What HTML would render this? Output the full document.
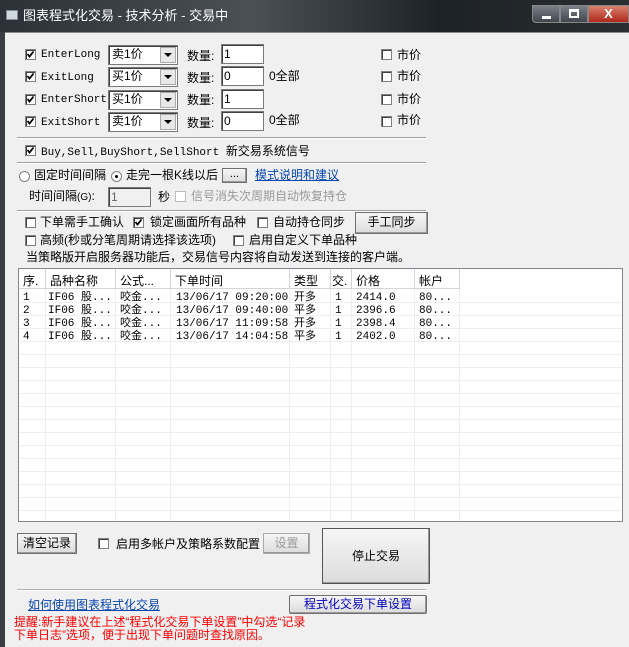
<!DOCTYPE html><html><head><meta charset="utf-8"><style>
*{margin:0;padding:0;box-sizing:border-box}
body{width:629px;height:647px;overflow:hidden;background:#f0f0f0;font-family:"Liberation Sans","Noto Sans CJK SC",sans-serif;font-size:12px;color:#000;position:relative}
.a{position:absolute;white-space:nowrap;line-height:14px}
.cb{position:absolute;width:11px;height:11px;border:1px solid #808080;background:#fff;box-shadow:inset 1px 1px 0 #404040}
.cb svg{position:absolute;left:0;top:0}
.mono{font-family:"Liberation Mono","Noto Sans CJK SC",monospace;font-size:11px}
.combo{position:absolute;width:70px;height:20px;background:#fff;border:1px solid #7a7a7a;box-shadow:inset 1px 1px 0 #404040}
.combo span{position:absolute;left:3px;top:0px;line-height:17px}
.combo i{position:absolute;right:1px;top:1px;width:16px;height:16px;background:#e8e8e8;border:1px solid #aaa}
.combo i::after{content:"";position:absolute;left:3px;top:5px;border:4px solid transparent;border-top:4px solid #000;border-bottom:0}
.inp{position:absolute;width:43px;height:20px;background:#fff;border:1px solid #7a7a7a;box-shadow:inset 1px 1px 0 #404040;padding:2px 2px;line-height:14px}
.sep{position:absolute;left:17px;width:409px;height:2px;border-top:1px solid #a0a0a0;border-bottom:1px solid #fff}
.btn{position:absolute;background:linear-gradient(#f6f6f6,#dcdcdc);border:1px solid #707070;box-shadow:inset -1px -1px 0 #999;text-align:center}
.rad{position:absolute;width:11px;height:11px;border-radius:50%;border:1px solid #808080;background:#fff}
.list{position:absolute;left:18px;top:268px;width:605px;height:254px;background:#fff;border:1px solid #828790;overflow:hidden}
.hd{position:absolute;top:0;height:20px;border-right:1px solid #d5d5d5;border-bottom:1px solid #d5d5d5;padding:3px 4px;background:#fff}
.vl{position:absolute;top:20px;bottom:0;width:1px;background:#eee}
.hl{position:absolute;left:0;right:0;height:1px;background:#eee}
.cell{position:absolute;font-family:"Liberation Mono","Noto Sans CJK SC",monospace;font-size:11px;line-height:13px}
</style></head><body>
<div style="position:absolute;left:0;top:0;width:629px;height:32px;background:linear-gradient(90deg,#2a3238,#4a5055 40%,#1d2226 70%,#2a2e30)"></div>
<div style="position:absolute;left:6px;top:10px;width:12px;height:10px;background:#d0d8e0;border:1px solid #889"></div>
<div class="a" style="left:23px;top:9px;color:#fff;font-size:13px">图表程式化交易 - 技术分析 - 交易中</div>
<div style="position:absolute;left:532px;top:5px;width:28px;height:18px;border:1px solid #888;background:linear-gradient(#7a8088,#40464c);border-radius:0 0 0 4px"><div style="position:absolute;left:9px;top:10px;width:9px;height:3px;background:#fff"></div></div>
<div style="position:absolute;left:560px;top:5px;width:28px;height:18px;border:1px solid #888;background:linear-gradient(#7a8088,#40464c)"><div style="position:absolute;left:8px;top:3px;width:10px;height:9px;border:2px solid #fff;border-top-width:3px"></div></div>
<div style="position:absolute;left:588px;top:5px;width:41px;height:18px;border:1px solid #888;background:linear-gradient(#d88070,#b02818);color:#fff;font-weight:bold;text-align:center;font-size:13px;line-height:16px">X</div>
<div style="position:absolute;left:0;top:32px;width:5px;height:615px;background:#3a3e42"></div>
<div style="position:absolute;left:5px;top:32px;width:624px;height:1px;background:#888"></div>

<div class="cb" style="left:25px;top:49px"><svg width="9" height="9"><path d="M1.5 4 L3.5 6.5 L7.5 1.5" stroke="#000" stroke-width="1.8" fill="none"/></svg></div><div class="a mono" style="left:41px;top:48px">EnterLong</div>
<div class="combo" style="left:108px;top:45px"><span>卖1价</span><i></i></div>
<div class="a" style="left:187px;top:49px">数量:</div><div class="inp" style="left:221px;top:44px">1</div>
<div class="cb" style="left:381px;top:49px"></div><div class="a" style="left:397px;top:48px">市价</div>

<div class="cb" style="left:25px;top:71px"><svg width="9" height="9"><path d="M1.5 4 L3.5 6.5 L7.5 1.5" stroke="#000" stroke-width="1.8" fill="none"/></svg></div><div class="a mono" style="left:41px;top:71px">ExitLong</div>
<div class="combo" style="left:108px;top:67px"><span>买1价</span><i></i></div>
<div class="a" style="left:187px;top:71px">数量:</div><div class="inp" style="left:221px;top:66px">0</div>
<div class="a" style="left:269px;top:69px">0全部</div>
<div class="cb" style="left:381px;top:71px"></div><div class="a" style="left:397px;top:69px">市价</div>

<div class="cb" style="left:25px;top:94px"><svg width="9" height="9"><path d="M1.5 4 L3.5 6.5 L7.5 1.5" stroke="#000" stroke-width="1.8" fill="none"/></svg></div><div class="a mono" style="left:41px;top:93px">EnterShort</div>
<div class="combo" style="left:108px;top:90px"><span>买1价</span><i></i></div>
<div class="a" style="left:187px;top:93px">数量:</div><div class="inp" style="left:221px;top:89px">1</div>
<div class="cb" style="left:381px;top:94px"></div><div class="a" style="left:397px;top:92px">市价</div>

<div class="cb" style="left:25px;top:116px"><svg width="9" height="9"><path d="M1.5 4 L3.5 6.5 L7.5 1.5" stroke="#000" stroke-width="1.8" fill="none"/></svg></div><div class="a mono" style="left:41px;top:116px">ExitShort</div>
<div class="combo" style="left:108px;top:112px"><span>卖1价</span><i></i></div>
<div class="a" style="left:187px;top:116px">数量:</div><div class="inp" style="left:221px;top:111px">0</div>
<div class="a" style="left:269px;top:113px">0全部</div>
<div class="cb" style="left:381px;top:116px"></div><div class="a" style="left:397px;top:113px">市价</div>

<div class="sep" style="top:137px"></div>
<div class="cb" style="left:25px;top:145px"><svg width="9" height="9"><path d="M1.5 4 L3.5 6.5 L7.5 1.5" stroke="#000" stroke-width="1.8" fill="none"/></svg></div><div class="a mono" style="left:41px;top:144px">Buy,Sell,BuyShort,SellShort <span style="font-family:'Noto Sans CJK SC';font-size:12px">新交易系统信号</span></div>
<div class="sep" style="top:162px"></div>

<div class="rad" style="left:19px;top:171px"></div><div class="a" style="left:34px;top:168px">固定时间间隔</div>
<div class="rad" style="left:111px;top:171px"><div style="position:absolute;left:3px;top:3px;width:3px;height:3px;border-radius:50%;background:#000"></div></div><div class="a" style="left:126px;top:168px">走完一根K线以后</div>
<div class="btn" style="left:222px;top:168px;width:25px;height:15px;line-height:11px;font-size:11px">...</div>
<div class="a" style="left:255px;top:168px;color:#0645ad;text-decoration:underline">模式说明和建议</div>
<div class="a" style="left:29px;top:189px">时间间隔<span style="font-size:10px">(G)</span>:</div>
<div class="inp" style="left:108px;top:187px;background:#f0f0f0;color:#666">1</div>
<div class="a" style="left:158px;top:190px">秒</div>
<div class="cb" style="left:175px;top:191px;border-color:#bbb;box-shadow:none"></div><div class="a" style="left:191px;top:189px;color:#999">信号消失次周期自动恢复持仓</div>
<div class="sep" style="top:210px"></div>

<div class="cb" style="left:25px;top:217px"></div><div class="a" style="left:40px;top:215px">下单需手工确认</div>
<div class="cb" style="left:133px;top:217px"><svg width="9" height="9"><path d="M1.5 4 L3.5 6.5 L7.5 1.5" stroke="#000" stroke-width="1.8" fill="none"/></svg></div><div class="a" style="left:150px;top:215px">锁定画面所有品种</div>
<div class="cb" style="left:257px;top:217px"></div><div class="a" style="left:273px;top:215px">自动持仓同步</div>
<div class="btn" style="left:355px;top:212px;width:73px;height:22px;line-height:19px">手工同步</div>
<div class="cb" style="left:25px;top:235px"></div><div class="a" style="left:40px;top:233px">高频(秒或分笔周期请选择该选项)</div>
<div class="cb" style="left:233px;top:235px"></div><div class="a" style="left:249px;top:233px">启用自定义下单品种</div>
<div class="a" style="left:26px;top:250px">当策略版开启服务器功能后，交易信号内容将自动发送到连接的客户端。</div>

<div class="list">
<div class="hd" style="left:0;width:27px">序.</div>
<div class="hd" style="left:27px;width:70px">品种名称</div>
<div class="hd" style="left:97px;width:55px">公式...</div>
<div class="hd" style="left:152px;width:119px">下单时间</div>
<div class="hd" style="left:271px;width:41px">类型</div>
<div class="hd" style="left:312px;width:21px;padding:3px 1px">交.</div>
<div class="hd" style="left:333px;width:63px">价格</div>
<div class="hd" style="left:396px;width:45px">帐户</div>
<div class="vl" style="left:26px"></div><div class="vl" style="left:96px"></div><div class="vl" style="left:151px"></div><div class="vl" style="left:270px"></div><div class="vl" style="left:311px"></div><div class="vl" style="left:332px"></div><div class="vl" style="left:395px"></div><div class="vl" style="left:440px"></div>
<div class="hl" style="top:33px"></div><div class="hl" style="top:46px"></div><div class="hl" style="top:59px"></div><div class="hl" style="top:72px"></div><div class="hl" style="top:85px"></div><div class="hl" style="top:98px"></div><div class="hl" style="top:111px"></div><div class="hl" style="top:124px"></div><div class="hl" style="top:137px"></div><div class="hl" style="top:150px"></div><div class="hl" style="top:163px"></div><div class="hl" style="top:176px"></div><div class="hl" style="top:189px"></div><div class="hl" style="top:202px"></div><div class="hl" style="top:215px"></div><div class="hl" style="top:228px"></div><div class="hl" style="top:241px"></div>
<div class="cell" style="left:4px;top:23px">1<br>2<br>3<br>4</div>
<div class="cell" style="left:29px;top:23px">IF06 股...<br>IF06 股...<br>IF06 股...<br>IF06 股...</div>
<div class="cell" style="left:101px;top:23px">咬金...<br>咬金...<br>咬金...<br>咬金...</div>
<div class="cell" style="left:157px;top:23px">13/06/17 09:20:00<br>13/06/17 09:40:00<br>13/06/17 11:09:58<br>13/06/17 14:04:58</div>
<div class="cell" style="left:275px;top:23px">开多<br>平多<br>开多<br>平多</div>
<div class="cell" style="left:316px;top:23px">1<br>1<br>1<br>1</div>
<div class="cell" style="left:337px;top:23px">2414.0<br>2396.6<br>2398.4<br>2402.0</div>
<div class="cell" style="left:400px;top:23px">80...<br>80...<br>80...<br>80...</div>
</div>

<div class="btn" style="left:17px;top:533px;width:60px;height:21px;line-height:18px">清空记录</div>
<div class="cb" style="left:98px;top:538px"></div><div class="a" style="left:116px;top:537px">启用多帐户及策略系数配置</div>
<div class="btn" style="left:263px;top:533px;width:47px;height:21px;line-height:18px;color:#999;border-color:#aaa">设置</div>
<div class="btn" style="left:322px;top:528px;width:108px;height:56px;line-height:54px;border-color:#555">停止交易</div>
<div class="sep" style="top:589px;border-top-color:#b0b0b0"></div>
<div class="a" style="left:28px;top:598px;color:#0645ad;text-decoration:underline">如何使用图表程式化交易</div>
<div class="btn" style="left:289px;top:595px;width:138px;height:19px;line-height:16px;color:#0000c0;border-radius:2px">程式化交易下单设置</div>
<div class="a" style="left:14px;top:616px;color:#f00;line-height:13px">提醒:新手建议在上述“程式化交易下单设置”中勾选“记录<br>下单日志”选项，便于出现下单问题时查找原因。</div>
</body></html>
